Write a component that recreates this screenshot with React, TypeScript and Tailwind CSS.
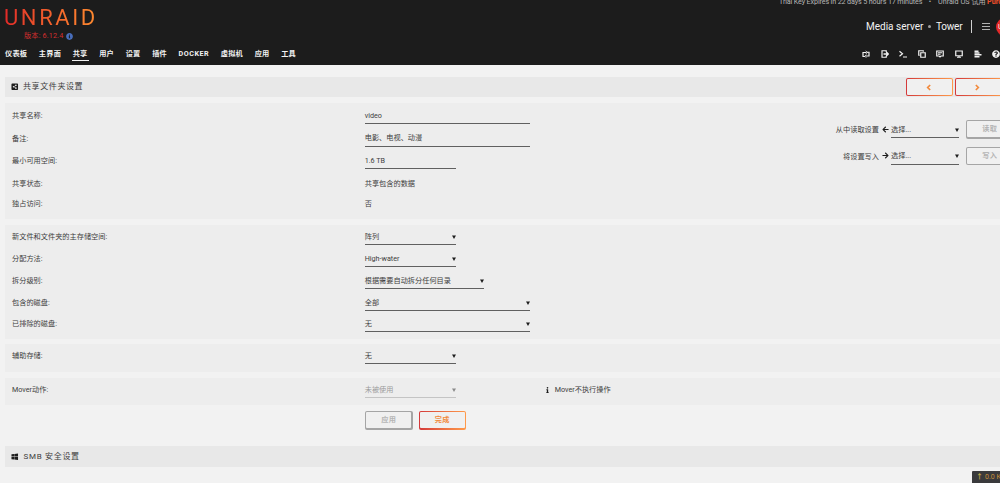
import React from 'react';
import { FaShareAltSquare, FaWindows, FaInfoCircle, FaArrowLeft, FaArrowRight, FaInfo, FaQuestionCircle } from 'react-icons/fa';

const NAV_ITEMS = ['仪表板', '主界面', '共享', '用户', '设置', '插件', 'DOCKER', '虚拟机', '应用', '工具'];

const ToolIcon = ({ children }: { children: React.ReactNode }) => (
    <svg viewBox="0 0 16 16" className="h-2 w-2 shrink-0" fill="none" stroke="#f2f2f2" strokeWidth="2.4">
        {children}
    </svg>
);

const Toolbar = () => (
    <div className="flex h-2 items-center gap-[10.6px]">
        <ToolIcon>
            <path d="M6 13H2V5h7M10 4.500h4V12H7" />
            <path d="M7.500 1.500 10.500 5l-3 3M8.500 9l-3 3.500 3 3" strokeWidth="1.600" />
        </ToolIcon>
        <ToolIcon>
            <path d="M10.500 4V1.500H2v13h8.500V12" />
            <path d="M5 8h9M10.500 4 14.500 8l-4 4" strokeWidth="3" />
        </ToolIcon>
        <ToolIcon>
            <path d="m1 2.500 6 5-6 5M8 14h8" />
        </ToolIcon>
        <ToolIcon>
            <path d="M5.500 5.500h9v9h-9zM3.500 10.500h-2v-9h9v2" />
        </ToolIcon>
        <ToolIcon>
            <path d="M1.500 2h13v10H10l-2 2-2-2H1.500zM4 5.500h8M4 8.500h5" />
        </ToolIcon>
        <ToolIcon>
            <path d="M1.500 2h13v9.500h-13zM4 14.500h8M8 11v3" />
        </ToolIcon>
        <ToolIcon>
            <path d="M1 2.500h8M1 6h10M1 9.500h14M1 13.500h10" strokeWidth="2.600" />
        </ToolIcon>
        <FaQuestionCircle className="h-2 w-2 shrink-0 text-[#f2f2f2]" />
    </div>
);

const Header = () => (
    <header className="flex h-[65px] shrink-0 justify-between bg-[#1c1c1c] text-[#f2f2f2]">
        <div className="flex flex-col pl-[4px]">
            <div className="mt-[7px] h-[22px] w-[95px] bg-linear-to-r from-[#e22828] to-[#ff8c2f] bg-clip-text text-[22px] leading-[22px] tracking-[2.6px] text-transparent">
                UNRAID
            </div>
            <div className="mt-[1px] flex h-[12px] items-center gap-[3px] pl-[20px] text-[7.2px] text-[#d52f2f]">
                <span className="tracking-[0.15px]">版本: 6.12.4</span>
                <FaInfoCircle className="h-[7px] w-[7px] text-[#486dba]" />
            </div>
            <nav className="mt-[6px] flex gap-[11.7px] pl-[1px] text-[7.2px] leading-[12px] font-bold tracking-[0.2px]">
                {NAV_ITEMS.map((item) => (
                    <a key={item} className={item === '共享' ? '-mx-[1px] h-[13px] border-b border-[#f2f2f2] px-[1px]' : 'h-[13px]'}>
                        {item === 'DOCKER' ? <span className="tracking-[0.5px]">{item}</span> : item}
                    </a>
                ))}
            </nav>
        </div>

        <div className="flex w-[221px] flex-col">
            <div className="mt-[-3px] flex h-[10px] items-center text-[7.2px] whitespace-nowrap text-[#b5b5b5]">
                <span className="w-[143px] shrink-0 tracking-[-0.14px]">Trial Key Expires in 22 days 5 hours 17 minutes</span>
                <span className="w-4 shrink-0 text-center">•</span>
                <span className="w-[49px] shrink-0">Unraid OS 试用</span>
                <span className="font-bold text-[#f0512c]">Purchase</span>
            </div>
            <div className="mt-[10px] flex h-[19px] items-center pl-[87px] text-[10px] whitespace-nowrap">
                <span className="w-[57px] shrink-0">Media server</span>
                <span className="flex w-[13px] shrink-0 justify-center">
                    <span className="h-[2.5px] w-[2.5px] rounded-full bg-[#a0a0a0]" />
                </span>
                <span className="w-[35px] shrink-0 tracking-[-0.2px]">Tower</span>
                <span className="mr-[10px] h-[13px] w-px shrink-0 bg-[#d0d0d0]" />
                <svg viewBox="0 0 8 8" className="h-2 w-2 shrink-0" stroke="#b0b0b0">
                    <path d="M0 .5h8M0 3.500h8M0 6.500h8" />
                </svg>
                <span className="ml-[6px] flex h-[18px] w-[18px] shrink-0 items-center rounded-full bg-[#e32929] pl-[2px] text-[7px]">U</span>
            </div>
            <div className="mt-[14px] pl-[83px]">
                <Toolbar />
            </div>
        </div>
    </header>
);

type FieldProps = { value: string; width: string; disabled?: boolean };

const Select = ({ value, width, disabled }: FieldProps) => (
    <div className={`flex h-4 items-center justify-between border-b ${width} ${disabled ? 'border-[#c4c4c4] text-[#9b9b9b]' : 'border-[#606060]'}`}>
        <span>{value}</span>
        <svg viewBox="0 0 4 4" className={disabled ? 'h-1 w-1 fill-[#8a8a8a]' : 'h-1 w-1 fill-[#1c1c1c]'}>
            <path d="M0 .4h4L2 4z" />
        </svg>
    </div>
);

const Input = ({ value, width }: FieldProps) => (
    <div className={`flex h-4 items-center border-b border-[#606060] ${width}`}>{value}</div>
);

const Row = ({ label, height = 'h-[22.5px]', children }: { label: string; height?: string; children: React.ReactNode }) => (
    <div className={`flex ${height}`}>
        <div className="w-[352.7px] leading-[15px]">{label}</div>
        {children}
    </div>
);

const Text = ({ children }: { children: React.ReactNode }) => <div className="leading-[15px]">{children}</div>;

const Button = ({ children, disabled }: { children: React.ReactNode; disabled?: boolean }) => (
    <div
        className={`h-[18.5px] w-[47.5px] shrink-0 rounded-[2px] p-[1.3px] text-[7.2px] font-bold tracking-[0.3px] ${
            disabled ? 'bg-[#a5a5a5] text-[#b5b5b5]' : 'bg-linear-to-r from-[#d4383a] to-[#ff9a4a] text-[#f28a3c]'
        }`}
    >
        <div className="flex h-full items-center justify-center rounded-[1px] bg-[#f0f0f0]">{children}</div>
    </div>
);

const Chevron = ({ d }: { d: string }) => (
    <svg viewBox="0 0 6 8" className="mr-[2px] h-[7px] w-[5px]" fill="none" stroke="#f28a3c" strokeWidth="2">
        <path d={d} />
    </svg>
);

const CopyRow = ({ label, icon, action }: { label: string; icon: React.ReactNode; action: string }) => (
    <div className="flex h-[26.5px] items-start">
        <span className="w-[80px] text-right leading-[19px]">{label}</span>
        <span className="flex h-[18px] w-3 items-center justify-center text-[7px] text-[#1c1c1c]">{icon}</span>
        <div className="mr-[7px] flex h-[18px] items-end">
            <Select value="选择..." width="w-[68px]" />
        </div>
        <Button disabled>{action}</Button>
    </div>
);

export default function App() {
    return (
        <div className="relative flex h-[483px] w-[1000px] flex-col overflow-hidden bg-[#f2f2f2] font-[Roboto,'Noto_Sans_CJK_SC',sans-serif] text-[7.2px] leading-[14px] text-[#3d3d3d]">
            <Header />

            <main className="flex flex-col pt-[12px] pl-[5px]">
                <div className="flex h-5 shrink-0 items-center bg-[#e8e8e8] pl-[6px] text-[8px] tracking-[0.6px]">
                    <FaShareAltSquare className="mr-[4.5px] h-[7.5px] w-[7.5px] text-[#1c1c1c]" />
                    <span className="w-[882.5px]">共享文件夹设置</span>
                    <div className="flex w-[94px] gap-[2px]">
                        <Button>
                            <Chevron d="M5 1 2 4l3 3" />
                        </Button>
                        <Button>
                            <Chevron d="m1 1 3 3-3 3" />
                        </Button>
                    </div>
                </div>

                <section className="mt-[6px] flex h-[116px] bg-[#ededed] pt-[5px] pl-[7px]">
                    <div className="w-[787px] shrink-0">
                        <Row label="共享名称:">
                            <Input value="video" width="w-[165px]" />
                        </Row>
                        <Row label="备注:">
                            <Input value="电影、电视、动漫" width="w-[165px]" />
                        </Row>
                        <Row label="最小可用空间:">
                            <Input value="1.6 TB" width="w-[91px]" />
                        </Row>
                        <Row label="共享状态:" height="h-[20.5px]">
                            <Text>共享包含的数据</Text>
                        </Row>
                        <Row label="独占访问:">
                            <Text>否</Text>
                        </Row>
                    </div>
                    <div className="pt-[12px]">
                        <CopyRow label="从中读取设置" icon={<FaArrowLeft />} action="读取" />
                        <CopyRow label="将设置写入" icon={<FaArrowRight />} action="写入" />
                    </div>
                </section>

                <section className="mt-[6px] h-[114px] bg-[#ededed] pt-[4px] pl-[7px]">
                    <Row label="新文件和文件夹的主存储空间:" height="h-[22px]">
                        <Select value="阵列" width="w-[91px]" />
                    </Row>
                    <Row label="分配方法:" height="h-[22px]">
                        <Select value="High-water" width="w-[91px]" />
                    </Row>
                    <Row label="拆分级别:" height="h-[22px]">
                        <Select value="根据需要自动拆分任何目录" width="w-[119px]" />
                    </Row>
                    <Row label="包含的磁盘:" height="h-[21px]">
                        <Select value="全部" width="w-[165px]" />
                    </Row>
                    <Row label="已排除的磁盘:" height="h-[22px]">
                        <Select value="无" width="w-[165px]" />
                    </Row>
                </section>

                <section className="mt-[5px] h-[28px] bg-[#ededed] pt-[4px] pl-[7px]">
                    <Row label="辅助存储:">
                        <Select value="无" width="w-[91px]" />
                    </Row>
                </section>

                <section className="mt-[6px] h-[27px] bg-[#ededed] pt-[4px] pl-[7px]">
                    <Row label="Mover动作:">
                        <Select value="未被使用" width="w-[91px]" disabled />
                        <div className="ml-[89px] flex h-[15px] items-center gap-[5px]">
                            <FaInfo className="h-[6px] w-[5px] text-[#1c1c1c]" />
                            <span>Mover不执行操作</span>
                        </div>
                    </Row>
                </section>

                <div className="mt-[6px] flex h-[19px] gap-[6px] pl-[360px]">
                    <Button disabled>应用</Button>
                    <Button>完成</Button>
                </div>

                <div className="mt-[16px] flex h-[21px] items-center bg-[#e8e8e8] pl-[6px] text-[8px] tracking-[0.7px]">
                    <FaWindows className="mr-[5px] h-[7.5px] w-[7.5px] text-[#1c1c1c]" />
                    <span>SMB 安全设置</span>
                </div>
            </main>

            {/* Network speed widget */}
            <div className="absolute right-0 bottom-0 flex h-3 w-[28px] items-center overflow-hidden rounded-tl-[1px] bg-[#3a3a3c] pl-1 text-[7px] whitespace-nowrap text-[#c98f3a]">
                <span className="mr-[2px] font-bold text-[#c5ac4a]">↑</span>
                <span>0.0 K</span>
            </div>
        </div>
    );
}
